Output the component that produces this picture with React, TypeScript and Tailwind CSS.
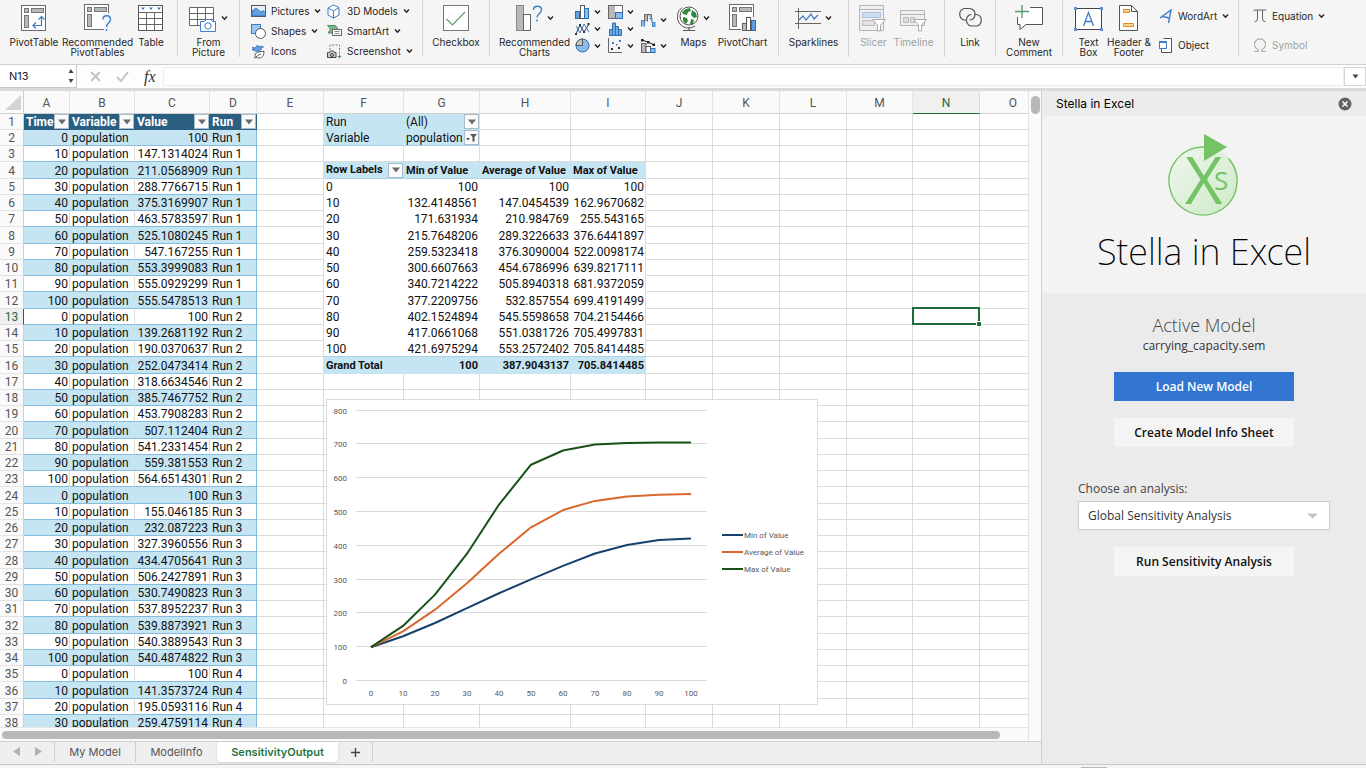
import React from "react";
import clsx from "clsx";

/* ---------- data ---------- */

const COLUMNS = [
  { name: "A", width: "w-[46px]" },
  { name: "B", width: "w-[65px]" },
  { name: "C", width: "w-[75px]" },
  { name: "D", width: "w-[47px]" },
  { name: "E", width: "w-[67px]" },
  { name: "F", width: "w-[80px]" },
  { name: "G", width: "w-[76px]" },
  { name: "H", width: "w-[91px]" },
  { name: "I", width: "w-[75px]" },
  { name: "J", width: "w-[67px]" },
  { name: "K", width: "w-[67px]" },
  { name: "L", width: "w-[67px]" },
  { name: "M", width: "w-[66px]" },
  { name: "N", width: "w-[67px]" },
  { name: "O", width: "w-[67px]" },
];

const RUNS: string[][] = [
  ["100", "147.1314024", "211.0568909", "288.7766715", "375.3169907", "463.5783597", "525.1080245", "547.167255", "553.3999083", "555.0929299", "555.5478513"],
  ["100", "139.2681192", "190.0370637", "252.0473414", "318.6634546", "385.7467752", "453.7908283", "507.112404", "541.2331454", "559.381553", "564.6514301"],
  ["100", "155.046185", "232.087223", "327.3960556", "434.4705641", "506.2427891", "530.7490823", "537.8952237", "539.8873921", "540.3889543", "540.4874822"],
  ["100", "141.3573724", "195.0593116", "259.4759114"],
];

const TABLE_ROWS = RUNS.flatMap((values, run) =>
  values.map((value, i) => [String(i * 10), "population", value, `Run ${run + 1}`]),
);

const PIVOT_ROWS = [
  ["0", "100", "100", "100"],
  ["10", "132.4148561", "147.0454539", "162.9670682"],
  ["20", "171.631934", "210.984769", "255.543165"],
  ["30", "215.7648206", "289.3226633", "376.6441897"],
  ["40", "259.5323418", "376.3090004", "522.0098174"],
  ["50", "300.6607663", "454.6786996", "639.8217111"],
  ["60", "340.7214222", "505.8940318", "681.9372059"],
  ["70", "377.2209756", "532.857554", "699.4191499"],
  ["80", "402.1524894", "545.5598658", "704.2154466"],
  ["90", "417.0661068", "551.0381726", "705.4997831"],
  ["100", "421.6975294", "553.2572402", "705.8414485"],
];

const SERIES = [
  { name: "Min of Value", color: "#17406d", column: 1 },
  { name: "Average of Value", color: "#d9682b", column: 2 },
  { name: "Max of Value", color: "#175217", column: 3 },
];

/* ---------- ribbon icons ---------- */

interface IconProps {
  w: number;
  h: number;
  children: React.ReactNode;
}

const Icon: React.FC<IconProps> = ({ w, h, children }) => (
  <svg width={w} height={h} viewBox={`0 0 ${w} ${h}`} fill="none" className="shrink-0" aria-hidden="true">
    {children}
  </svg>
);

const Chevron = () => (
  <Icon w={7} h={6}>
    <path d="M1 1.5 3.5 4.2 6 1.5" stroke="#222" strokeWidth="1.4" />
  </Icon>
);

const PivotFrame = () => (
  <>
    <rect x="0.5" y="0.5" width="24" height="25" fill="#fff" stroke="#6b6b6b" />
    <rect x="3.5" y="3.5" width="4" height="4" fill="#b8b8b8" stroke="#777" />
    <rect x="10.5" y="3.5" width="12" height="4" fill="#b8b8b8" stroke="#777" />
    <rect x="3.5" y="10.5" width="4" height="12" fill="#b8b8b8" stroke="#777" />
  </>
);

const PivotTableIcon = () => (
  <Icon w={26} h={26}>
    <PivotFrame />
    <path d="M12 20.5h8.5V12M17.5 14.5l3-3 3 3M15 17.5l-3 3 3 3" stroke="#3b7dc8" strokeWidth="1.2" />
  </Icon>
);

const RecommendedPivotIcon = () => (
  <Icon w={28} h={28}>
    <PivotFrame />
    <path d="M19 9h9v18h-8z" fill="#f5f5f5" />
    <path d="M19 15.500c0-5 7.500-5 7.500 0 0 3.500-4 3.500-4 7.500M22.500 25v2" stroke="#3b7dc8" strokeWidth="1.4" />
  </Icon>
);

const TableIcon = () => (
  <Icon w={26} h={26}>
    <rect x="0.5" y="0.5" width="24" height="25" fill="#fff" stroke="#555" />
    <path d="M.5 7.500h24M.5 13.500h24M.5 19.500h24M8.500 7v18M16.500 7v18" stroke="#666" />
    <path d="M3 2.500h4L5 5zM11 2.500h4L13 5zM19 2.500h4L21 5z" fill="#2f74c4" />
  </Icon>
);

const FromPictureIcon = () => (
  <Icon w={28} h={27}>
    <path d="M.5 2.500h24v18H.5zM.5 8.500h24M.5 14.500h24M8.500 2.500v18M16.500 2.500v18" fill="#fff" stroke="#666" />
    <path d="M11.500 16.500h4l1.500-2h5l1.500 2h3v10h-15z" fill="#fff" stroke="#3b7dc8" />
    <circle cx="19" cy="21" r="3.200" stroke="#3b7dc8" />
  </Icon>
);

const PicturesIcon = () => (
  <Icon w={15} h={12}>
    <rect x="0.5" y="0.5" width="14" height="11" fill="#e8f1fb" stroke="#555" />
    <path d="M1 6l4-3 5 4 2-1.500 2.500 2V11H1z" fill="#5f9fe0" stroke="#2f6db5" strokeWidth="0.8" />
  </Icon>
);

const ShapesIcon = () => (
  <Icon w={15} h={15}>
    <rect x="0.5" y="0.5" width="9" height="9" fill="#9cc4ec" stroke="#3b7dc8" />
    <circle cx="9.500" cy="9.500" r="5" fill="#fff" stroke="#555" />
  </Icon>
);

const IconsIcon = () => (
  <Icon w={15} h={15}>
    <path d="M1 3.500l3 .5 2.500-3 1 2 3-1 2 1-2 1c-.5 4-5 4.500-9.500 1.500l2-.5z" fill="#5f9fe0" stroke="#2f6db5" strokeWidth="0.8" />
    <path d="M4 13.500c-1-6 5-6 9-6 0 6-4 8-8 5.500M3.500 14.500c2-2 4-4 6.500-4.500" fill="#fff" stroke="#555" />
  </Icon>
);

const ModelsIcon = () => (
  <Icon w={15} h={15}>
    <path d="M6.500 1l5.500 2.500v7.500l-5.500 3-5.500-3V4z" fill="#fff" stroke="#3b7dc8" />
    <path d="M1 4l5.500 3L12 3.500M6.500 7v7" stroke="#3b7dc8" />
  </Icon>
);

const SmartArtIcon = () => (
  <Icon w={15} h={12}>
    <path d="M.5.5h8L11 4 8 8H1l2.500-4z" fill="#79b98a" stroke="#4b9460" />
    <rect x="5.500" y="4.500" width="9" height="6" fill="#fff" stroke="#666" />
    <path d="M7.500 6.500h5M7.500 8.500h5" stroke="#888" />
  </Icon>
);

const ScreenshotIcon = () => (
  <Icon w={15} h={15}>
    <path d="M3 6V1h9.500v9" stroke="#777" strokeDasharray="2 1.500" />
    <path d="M.5 8.500h2l1-1.500h3l1 1.500h1.500v5H.5z" fill="#ccc" stroke="#444" />
    <circle cx="5" cy="11" r="1.500" stroke="#444" />
    <path d="M12.500 10.500v4M10.500 12.500h4" stroke="#4b9460" />
  </Icon>
);

const CheckboxIcon = () => (
  <Icon w={26} h={26}>
    <rect x="0.5" y="0.5" width="25" height="25" fill="#fff" stroke="#777" />
    <path d="M3.500 14l6 6L22 7" stroke="#5a9e6c" strokeWidth="1.2" />
  </Icon>
);

const RecommendedChartsIcon = () => (
  <Icon w={27} h={26}>
    <rect x="0.5" y="0.5" width="7" height="25" fill="#b8b8b8" stroke="#888" />
    <rect x="7.500" y="9.500" width="7" height="16" fill="#fff" stroke="#666" />
    <path d="M17.500 5c0-5 8-5 8 0 0 3.500-4.500 3.500-4.500 7.500M21 14.500v2" stroke="#3b7dc8" strokeWidth="1.400" />
  </Icon>
);

const ColumnChartIcon = () => (
  <Icon w={15} h={14}>
    <rect x="0.5" y="6.500" width="4" height="7" fill="#5f9fe0" stroke="#2f6db5" />
    <rect x="5.500" y="0.5" width="4" height="13" fill="#fff" stroke="#555" />
    <rect x="9.500" y="3.500" width="4" height="10" fill="#8dbcea" stroke="#2f6db5" />
  </Icon>
);

const LineChartIcon = () => (
  <Icon w={15} h={14}>
    <path d="M1 12L5 3l4 7 5-8" stroke="#333" />
    <path d="M1 4l4 7 4-9 5 8" stroke="#3b7dc8" />
    <path d="M0 11h2v2H0zM4 2h2v2H4zM8 9h2v2H8zM12.500 1h2v2h-2z" fill="#333" />
  </Icon>
);

const PieChartIcon = () => (
  <Icon w={15} h={15}>
    <circle cx="7.500" cy="7.500" r="6.500" fill="#8dbcea" stroke="#2f6db5" />
    <path d="M7.500 7.500V1A6.500 6.500 0 0 0 1 7.500z" fill="#c4c4c4" stroke="#555" />
  </Icon>
);

const TreemapIcon = () => (
  <Icon w={15} h={14}>
    <rect x="0.5" y="0.5" width="14" height="13" fill="#fff" stroke="#666" />
    <rect x="1" y="1" width="6" height="12" fill="#b8b8b8" />
    <rect x="7.500" y="7.500" width="7" height="6" fill="#8dbcea" stroke="#2f6db5" />
  </Icon>
);

const HistogramIcon = () => (
  <Icon w={15} h={14}>
    <path d="M1.500 13.500v-6h3v6zM4.500 13.500V1h3v12.500zM7.500 13.500v-9h3v9zM10.500 13.500v-6h3v6z" fill="#6fa9e4" stroke="#2f6db5" />
  </Icon>
);

const ScatterIcon = () => (
  <Icon w={15} h={15}>
    <path d="M.5 0v14.500H14" stroke="#666" />
    <path d="M3 10h2v2H3zM10 9h2v2h-2z" fill="#333" />
    <path d="M4 4h2v2H4zM8 6h1.500v1.500H8zM11 2h2v2h-2z" fill="#3b7dc8" />
  </Icon>
);

const WaterfallIcon = () => (
  <Icon w={15} h={16}>
    <path d="M.5 14.500v-6h3v6" stroke="#3b7dc8" fill="#8dbcea" />
    <path d="M3.500 9.500v-7h3v7M6.500 2.500h4v5" fill="#b8b8b8" stroke="#666" />
    <path d="M8.500 6.500h2.500v4M11.500 10.500h2.500v4h-2.500z" stroke="#3b7dc8" fill="#8dbcea" />
  </Icon>
);

const ComboIcon = () => (
  <Icon w={15} h={15}>
    <rect x="0.5" y="5.500" width="4.500" height="9" fill="#b8b8b8" stroke="#666" />
    <rect x="5" y="8.500" width="4.500" height="6" fill="#fff" stroke="#555" />
    <rect x="9.500" y="10.500" width="4.500" height="4" fill="#8dbcea" stroke="#2f6db5" />
    <path d="M1 2l6 2 6 3" stroke="#222" />
    <path d="M0 1h2.500v2.500H0zM6 3h2.500v2.500H6zM11.500 5.500H14V8h-2.500z" fill="#222" />
  </Icon>
);

const MapsIcon = () => (
  <Icon w={22} h={27}>
    <circle cx="12" cy="11" r="9" fill="#fff" stroke="#555" />
    <path d="M9 4l4-1 1 3-3 1-1 3-4-1-1-2zM15 5l4 3 1 4-3 1-3-3zM6 12l4 1 1 3-2 3-3-3zM14 14l3 1-1 4-3 0z" fill="#35873f" />
    <path d="M5 2.500A11 11 0 1 0 18 21M12 22v3.500M6 25.500h12" stroke="#555" />
  </Icon>
);

const PivotChartIcon = () => (
  <Icon w={28} h={28}>
    <PivotFrame />
    <path d="M12 17h5v-4h11v15H12z" fill="#f5f5f5" />
    <rect x="13.500" y="19.500" width="4" height="7" fill="#b8b8b8" stroke="#666" />
    <rect x="17.500" y="13.500" width="4" height="13" fill="#fff" stroke="#555" />
    <rect x="22.500" y="16.500" width="4" height="10" fill="#5f9fe0" stroke="#2f6db5" />
  </Icon>
);

const SparklineIcon = () => (
  <Icon w={26} h={22}>
    <path d="M0 4.500h26M0 16.500h26M3.500 1v21" stroke="#666" />
    <path d="M4 13l4-4 3 4 5-6 3 5 4-4" stroke="#3b7dc8" strokeWidth="1.200" />
  </Icon>
);

const Funnel = () => <path d="M13.500 14.500h13l-5 5.500v6h-3v-6z" fill="#fff" stroke="#aaa" />;

const SlicerIcon = () => (
  <Icon w={28} h={27}>
    <path d="M.5.5h24v25H.5zM.5 4.500h24" fill="#f0f0f0" stroke="#b5b5b5" />
    <rect x="3.500" y="7.500" width="18" height="5" fill="#cfdff2" stroke="#a9c2e0" />
    <rect x="3.500" y="15.500" width="12" height="5" fill="#e2e2e2" stroke="#bbb" />
    <Funnel />
  </Icon>
);

const TimelineIcon = () => (
  <Icon w={28} h={27}>
    <path d="M.5 5.500h24v15H.5zM.5 9.500h24" fill="#f0f0f0" stroke="#b5b5b5" />
    <path d="M3.500 12.500h5v5h-5zM10.500 12.500h4v5h-4z" fill="#ddd" stroke="#bbb" />
    <Funnel />
  </Icon>
);

const LinkIcon = () => (
  <Icon w={27} h={22}>
    <path d="M9 13H7A6 6 0 0 1 7 1.500h5.500a5.800 5.800 0 0 1 5 8.500c-1 2-3 3-5 3" stroke="#555" strokeWidth="1.200" />
    <path d="M17.500 7.500h2.500a6 6 0 0 1 0 11.500h-5.500a5.800 5.800 0 0 1-4.500-8.500c1-2 2.500-3 4.500-3" stroke="#555" strokeWidth="1.200" />
  </Icon>
);

const CommentIcon = () => (
  <Icon w={28} h={26}>
    <path d="M15 2.500h12.500v17H11l-6 5v-5H2.500V12" fill="#fff" stroke="#555" />
    <path d="M0 6.500h14M7 0v13" stroke="#5a9e6c" strokeWidth="1.400" />
  </Icon>
);

const TextBoxIcon = () => (
  <Icon w={29} h={25}>
    <rect x="1.500" y="2.500" width="26" height="21" fill="#fff" stroke="#444" />
    <path d="M0 1h3v3H0zM26 1h3v3h-3zM0 22h3v3H0zM26 22h3v3h-3z" fill="#5f8fd0" />
    <path d="M9.500 20l5-13.500 5 13.500M11.500 15.500h6" stroke="#3b7dc8" strokeWidth="1.300" />
  </Icon>
);

const HeaderFooterIcon = () => (
  <Icon w={20} h={26}>
    <path d="M.5.5h12l6 6v19H.5z" fill="#fff" stroke="#555" />
    <path d="M12.500.5v6h6" stroke="#555" />
    <path d="M4.500 4.500h6v3h-6zM4.500 18.500h10v3h-10z" fill="#fbd28f" stroke="#e08a2b" />
  </Icon>
);

const WordArtIcon = () => (
  <Icon w={13} h={15}>
    <path d="M1 9L12 1 9.500 14M3.500 7.500l7 1.500" stroke="#3b7dc8" strokeWidth="1.400" />
  </Icon>
);

const ObjectIcon = () => (
  <Icon w={13} h={15}>
    <path d="M4.500.5h8v14h-10v-4" fill="#fff" stroke="#555" />
    <rect x="0.5" y="3.500" width="7" height="7" fill="#fff" stroke="#3b7dc8" />
    <path d="M0 3h8v2H0z" fill="#3b7dc8" />
  </Icon>
);

const EquationIcon = () => (
  <Icon w={14} h={14}>
    <path d="M0 2.500Q.5 1 3 1h10.500M4.500 1v8q0 4-3 4M9.500 1v9q0 3 3 2.500" stroke="#666" />
  </Icon>
);

const SymbolIcon = () => (
  <Icon w={14} h={15}>
    <path d="M1 13.500h4v-2A5.500 5.500 0 1 1 9 11.500v2h4" stroke="#aaa" strokeWidth="1.200" />
  </Icon>
);

/* ---------- ribbon ---------- */

const RibbonGroup: React.FC<{ className?: string; last?: boolean; children: React.ReactNode }> = ({
  className,
  last,
  children,
}) => <div className={clsx("flex h-[57px] shrink-0", !last && "border-r border-[#d6d6d6]", className)}>{children}</div>;

interface BigButtonProps {
  icon: React.ReactNode;
  lines: string[];
  className?: string;
  menu?: boolean;
  disabled?: boolean;
}

const BigButton: React.FC<BigButtonProps> = ({ icon, lines, className, menu, disabled }) => (
  <button
    type="button"
    disabled={disabled}
    className={clsx("flex shrink-0 flex-col items-center justify-start pt-[3px]", disabled && "text-[#a0a0a0]", className)}
  >
    <span className="mb-[4px] flex h-[30px] shrink-0 items-center gap-1">
      {icon}
      {menu && <Chevron />}
    </span>
    {lines.map((line) => (
      <span key={line} className="leading-[10px] whitespace-nowrap">
        {line}
      </span>
    ))}
  </button>
);

interface SmallButtonProps {
  icon: React.ReactNode;
  label: string;
  menu?: boolean;
  disabled?: boolean;
}

const SmallButton: React.FC<SmallButtonProps> = ({ icon, label, menu, disabled }) => (
  <button
    type="button"
    disabled={disabled}
    className={clsx("flex h-5 shrink-0 items-center gap-[5px] whitespace-nowrap", disabled && "text-[#a0a0a0]")}
  >
    <span className="flex w-[15px] justify-center">{icon}</span>
    {label}
    {menu && <Chevron />}
  </button>
);

const ChartButton: React.FC<{ icon: React.ReactNode; label: string }> = ({ icon, label }) => (
  <button type="button" aria-label={label} className="flex h-[17px] shrink-0 items-center gap-1">
    {icon}
    <Chevron />
  </button>
);

const Ribbon = () => (
  <div className="flex h-[65px] shrink-0 overflow-hidden border-b border-[#cfcfcf] bg-[#f5f5f5] text-[10px] text-[#262626]">
    <RibbonGroup className="w-[178px] gap-[7px] pl-[11px]">
      <BigButton className="w-[46px]" icon={<PivotTableIcon />} lines={["PivotTable"]} />
      <BigButton className="w-[67px]" icon={<RecommendedPivotIcon />} lines={["Recommended", "PivotTables"]} />
      <BigButton className="w-[26px]" icon={<TableIcon />} lines={["Table"]} />
    </RibbonGroup>
    <RibbonGroup className="w-[62px] justify-center">
      <BigButton icon={<FromPictureIcon />} lines={["From", "Picture"]} menu />
    </RibbonGroup>
    <RibbonGroup className="w-[183px] pl-[11px]">
      <div className="flex w-[76px] flex-col items-start pt-[1px]">
        <SmallButton icon={<PicturesIcon />} label="Pictures" menu />
        <SmallButton icon={<ShapesIcon />} label="Shapes" menu />
        <SmallButton icon={<IconsIcon />} label="Icons" />
      </div>
      <div className="flex flex-col items-start pt-[1px]">
        <SmallButton icon={<ModelsIcon />} label="3D Models" menu />
        <SmallButton icon={<SmartArtIcon />} label="SmartArt" menu />
        <SmallButton icon={<ScreenshotIcon />} label="Screenshot" menu />
      </div>
    </RibbonGroup>
    <RibbonGroup className="w-[67px] justify-center">
      <BigButton icon={<CheckboxIcon />} lines={["Checkbox"]} />
    </RibbonGroup>
    <RibbonGroup className="w-[289px] pl-[11px]">
      <BigButton className="w-[67px]" icon={<RecommendedChartsIcon />} lines={["Recommended", "Charts"]} menu />
      <div className="ml-[7px] flex gap-[7px] pt-[3px]">
        <div className="flex flex-col">
          <ChartButton icon={<ColumnChartIcon />} label="Column" />
          <ChartButton icon={<LineChartIcon />} label="Line" />
          <ChartButton icon={<PieChartIcon />} label="Pie" />
        </div>
        <div className="flex flex-col">
          <ChartButton icon={<TreemapIcon />} label="Hierarchy" />
          <ChartButton icon={<HistogramIcon />} label="Statistical" />
          <ChartButton icon={<ScatterIcon />} label="Scatter" />
        </div>
        <div className="flex flex-col gap-[9px] pt-2">
          <ChartButton icon={<WaterfallIcon />} label="Waterfall" />
          <ChartButton icon={<ComboIcon />} label="Combo" />
        </div>
      </div>
      <BigButton className="ml-[9px] w-[35px]" icon={<MapsIcon />} lines={["Maps"]} menu />
      <BigButton className="ml-[8px] w-[47px]" icon={<PivotChartIcon />} lines={["PivotChart"]} />
    </RibbonGroup>
    <RibbonGroup className="w-[70px] justify-center">
      <BigButton icon={<SparklineIcon />} lines={["Sparklines"]} menu />
    </RibbonGroup>
    <RibbonGroup className="w-[96px] justify-center gap-[6px]">
      <BigButton icon={<SlicerIcon />} lines={["Slicer"]} disabled />
      <BigButton icon={<TimelineIcon />} lines={["Timeline"]} disabled />
    </RibbonGroup>
    <RibbonGroup className="w-[51px] justify-center">
      <BigButton icon={<LinkIcon />} lines={["Link"]} />
    </RibbonGroup>
    <RibbonGroup className="w-[67px] justify-center">
      <BigButton icon={<CommentIcon />} lines={["New", "Comment"]} />
    </RibbonGroup>
    <RibbonGroup className="w-[176px] pl-[11px]">
      <BigButton className="w-[29px]" icon={<TextBoxIcon />} lines={["Text", "Box"]} />
      <BigButton className="ml-[5px] w-[42px]" icon={<HeaderFooterIcon />} lines={["Header &", "Footer"]} />
      <div className="ml-[8px] flex flex-col items-start gap-[9px] pt-[6px]">
        <SmallButton icon={<WordArtIcon />} label="WordArt" menu />
        <SmallButton icon={<ObjectIcon />} label="Object" />
      </div>
    </RibbonGroup>
    <RibbonGroup className="pl-[13px]" last>
      <div className="flex flex-col items-start gap-[9px] pt-[6px]">
        <SmallButton icon={<EquationIcon />} label="Equation" menu />
        <SmallButton icon={<SymbolIcon />} label="Symbol" disabled />
      </div>
    </RibbonGroup>
  </div>
);

/* ---------- formula bar ---------- */

const FormulaBar = () => (
  <div className="flex h-[26px] shrink-0 items-center border-b-[3px] border-[#dadada] bg-[#fdfdfd]">
    <div className="flex h-[23px] w-[77px] items-center border-r border-b border-[#c8c8c8] bg-white pr-[1px] pl-[9px]">
      <input
        aria-label="Name box"
        defaultValue="N13"
        className="min-w-0 flex-1 bg-transparent text-[11px] text-[#1a1a1a] outline-none"
      />
      <Icon w={8} h={16}>
        <path d="M4 1l2.500 4h-5zM4 15l2.500-4h-5z" fill="#444" />
      </Icon>
    </div>
    <div className="flex w-[86px] items-center gap-[15px] pl-[13px]">
      <button type="button" aria-label="Cancel">
        <Icon w={11} h={11}>
          <path d="M1 1l9 9M10 1l-9 9" stroke="#c2c2c2" strokeWidth="1.800" />
        </Icon>
      </button>
      <button type="button" aria-label="Enter">
        <Icon w={13} h={11}>
          <path d="M1 6l4 4 7-9" stroke="#c2c2c2" strokeWidth="1.800" />
        </Icon>
      </button>
      <button type="button" className="font-['Liberation_Serif',serif] text-[16px] leading-5 text-[#333] italic">
        fx
      </button>
    </div>
    <input aria-label="Formula" className="h-[19px] min-w-0 flex-1 border border-[#ececec] bg-white outline-none" />
    <button
      type="button"
      aria-label="Expand formula bar"
      className="flex h-[19px] w-[22px] items-center justify-center border border-[#d5d5d5] bg-white"
    >
      <Icon w={7} h={5}>
        <path d="M.5.5h6l-3 4z" fill="#444" />
      </Icon>
    </button>
  </div>
);

/* ---------- sheet ---------- */

const FilterButton: React.FC<{ label: string; filtered?: boolean }> = ({ label, filtered }) => (
  <button
    type="button"
    aria-label={`Filter ${label}`}
    className="flex size-[15px] shrink-0 items-center justify-center border border-[#a9bccb] bg-[#fafafa]"
  >
    {filtered ? (
      <Icon w={11} h={9}>
        <path d="M0 5h4L2 7.500zM4 1h7L8.500 4v4.500h-2V4z" fill="#555" />
      </Icon>
    ) : (
      <Icon w={8} h={6}>
        <path d="M0 .5h8L4 5.500z" fill="#6b6b6b" />
      </Icon>
    )}
  </button>
);

interface Cell {
  text?: string;
  className: string;
  filter?: boolean;
  filtered?: boolean;
}

const GRID = "border-[#dcdcdc]";
const TABLE_HEADS = ["Time", "Variable", "Value", "Run"];
const PIVOT_HEADS = ["Row Labels", "Min of Value", "Average of Value", "Max of Value"];

function getCell(row: number, col: number): Cell {
  // data table, A:D
  if (col < 4) {
    if (row === 1) {
      return { text: TABLE_HEADS[col], filter: true, className: "border-[#2a5f82] bg-[#2a5f82] font-bold text-white pl-[2px]" };
    }
    return {
      text: TABLE_ROWS[row - 2]?.[col],
      className: clsx(
        "border-b-[#84bde0]",
        row % 2 === 0 ? "bg-[#c6e5f3]" : "bg-white",
        col === 3 ? "border-r-[#84bde0]" : row % 2 === 0 ? "border-r-[#c6e5f3]" : "border-r-[#dcdcdc]",
        col % 2 === 0 ? "pr-[1px] text-right" : "pl-[2px]",
      ),
    };
  }
  // pivot filters, F1:G2
  if (row <= 2 && (col === 5 || col === 6)) {
    const text = [
      ["Run", "(All)"],
      ["Variable", "population"],
    ][row - 1][col - 5];
    return {
      text,
      filter: col === 6,
      filtered: row === 2,
      className: clsx("border-[#c6e5f3] bg-[#c6e5f3] pl-[2px]", row === 2 && "border-b-[#a9d3ea]"),
    };
  }
  // pivot body, F4:I16
  if (col >= 5 && col <= 8 && row >= 4 && row <= 16) {
    const i = col - 5;
    if (row === 4) {
      return {
        text: PIVOT_HEADS[i],
        filter: i === 0,
        className: "border-r-[#c6e5f3] border-b-[#a9d3ea] bg-[#c6e5f3] pl-[2px] text-[11px] font-bold",
      };
    }
    if (row === 16) {
      return {
        text: ["Grand Total", "100", "387.9043137", "705.8414485"][i],
        className: clsx("border-[#c6e5f3] bg-[#c6e5f3] text-[11px] font-bold", i === 0 ? "pl-[2px]" : "pr-[1px] text-right"),
      };
    }
    return {
      text: PIVOT_ROWS[row - 5][i],
      className: clsx(
        col === 8 ? "border-r-[#dcdcdc]" : "border-r-white",
        row === 15 ? "border-b-[#a9d3ea]" : "border-b-white",
        i === 0 ? "pl-[2px]" : "pr-[1px] text-right",
      ),
    };
  }
  return { className: GRID };
}

const SheetCell: React.FC<{ row: number; col: number }> = ({ row, col }) => {
  const cell = getCell(row, col);
  const selected = row === 13 && col === 13;
  return (
    <td
      className={clsx(
        "border-r border-b whitespace-nowrap",
        !cell.filter && "pt-[1px]",
        selected && "relative",
        cell.className,
      )}
    >
      {cell.filter ? (
        <div className="flex h-[15px] items-center justify-between">
          {cell.text}
          <FilterButton label={cell.text ?? ""} filtered={cell.filtered} />
        </div>
      ) : (
        cell.text
      )}
      {selected && (
        <div className="absolute -inset-x-[1px] -top-[2px] -bottom-[1px] border-2 border-[#1f6b3c]">
          <div className="absolute -right-[3px] -bottom-[3px] size-[5px] border-t border-l border-white bg-[#1f6b3c]" />
        </div>
      )}
    </td>
  );
};

const Sheet = () => (
  <table className="w-[1047px] table-fixed border-separate border-spacing-0 font-['Roboto',sans-serif] text-[12px] leading-[14px] text-[#111]">
    <colgroup>
      <col className="w-[24px]" />
      {COLUMNS.map((column) => (
        <col key={column.name} className={column.width} />
      ))}
    </colgroup>
    <thead>
      <tr className="h-[23px] bg-[#fafafa] text-[#555]">
        <th aria-label="Select all" className="border-r border-b border-[#cfcfcf] p-0">
          <div className="flex justify-end pr-[2px]">
            <Icon w={16} h={15}>
              <path d="M16 0v15H0z" fill="#d4d4d4" />
            </Icon>
          </div>
        </th>
        {COLUMNS.map((column) => (
          <th
            key={column.name}
            scope="col"
            className={clsx(
              "border-r border-b pt-[2px] font-normal",
              column.name === "N"
                ? "border-r-[#dcdcdc] border-b-[#1f6b3c] bg-[#f0f0f0] text-[#1f6b3c]"
                : "border-r-[#e4e4e4] border-b-[#cfcfcf]",
            )}
          >
            {column.name}
          </th>
        ))}
      </tr>
    </thead>
    <tbody>
      {Array.from({ length: 38 }, (_, i) => i + 1).map((row) => (
        <tr key={row} className="h-[16px] nth-[4n]:h-[17px]">
          <th
            scope="row"
            className={clsx(
              "border-r border-b pt-[1px] text-center font-normal",
              row === 13
                ? "border-r-[#1f6b3c] border-b-[#dcdcdc] bg-[#f0f0f0] text-[#1f6b3c]"
                : "border-r-[#cfcfcf] border-b-[#e4e4e4] bg-[#fafafa] text-[#555]",
            )}
          >
            {row}
          </th>
          {COLUMNS.map((column, col) => (
            <SheetCell key={column.name} row={row} col={col} />
          ))}
        </tr>
      ))}
    </tbody>
  </table>
);

/* ---------- chart ---------- */

const chartX = (i: number) => 45 + i * 32;
const chartY = (value: number) => 281 - value * 0.338;

const PivotLineChart = () => (
  <div className="absolute top-[308px] left-[326px] border border-[#dcdcdc] bg-white">
    <svg width={490} height={304} viewBox="0 0 490 304" className="font-['Roboto',sans-serif] text-[8px]" fill="#595959">
      {[0, 100, 200, 300, 400, 500, 600, 700, 800].map((tick) => (
        <g key={tick}>
          <path d={`M29 ${Math.round(chartY(tick)) - 0.5}h351`} stroke="#dadada" />
          <text x="20" y={chartY(tick) + 3} textAnchor="end">
            {tick}
          </text>
        </g>
      ))}
      {PIVOT_ROWS.map((row, i) => (
        <text key={row[0]} x={chartX(i) - 1} y="296" textAnchor="middle">
          {row[0]}
        </text>
      ))}
      {SERIES.map((series, i) => (
        <g key={series.name}>
          <polyline
            points={PIVOT_ROWS.map((row, j) => `${chartX(j) - 1},${chartY(Number(row[series.column]))}`).join(" ")}
            fill="none"
            stroke={series.color}
            strokeWidth="2"
            strokeLinejoin="round"
          />
          <path d={`M395 ${135 + i * 17}h21`} stroke={series.color} strokeWidth="2" />
          <text x="417" y={138 + i * 17}>
            {series.name}
          </text>
        </g>
      ))}
    </svg>
  </div>
);

/* ---------- sheet tabs ---------- */

const SheetTabs = () => (
  <div className="flex h-[23px] shrink-0 items-stretch border-t border-[#cfcfcf] bg-[#efefef] pb-[2px] text-[11px] text-[#555]">
    <div className="flex w-[55px] items-center justify-center gap-[13px] border-r border-[#d0d0d0]">
      <button type="button" aria-label="Previous sheet">
        <Icon w={8} h={10}>
          <path d="M7 0v9L0 4.500z" fill="#b0b0b0" />
        </Icon>
      </button>
      <button type="button" aria-label="Next sheet">
        <Icon w={8} h={10}>
          <path d="M1 0v9l7-4.500z" fill="#b0b0b0" />
        </Icon>
      </button>
    </div>
    <button type="button" className="w-[81px] border-r border-[#d0d0d0]">
      My Model
    </button>
    <button type="button" className="w-[81px]">
      ModelInfo
    </button>
    <button type="button" className="w-[121px] rounded-b-sm bg-white font-semibold text-[#1d7440] shadow-sm">
      SensitivityOutput
    </button>
    <button type="button" aria-label="Add sheet" className="flex w-[35px] items-center justify-center border-r border-[#d0d0d0]">
      <Icon w={9} h={9}>
        <path d="M4.500 0v9M0 4.500h9" stroke="#444" strokeWidth="1.400" />
      </Icon>
    </button>
  </div>
);

/* ---------- add-in pane ---------- */

const StellaLogo = () => (
  <svg width={72} height={84} viewBox="0 0 72 84" className="overflow-visible" aria-hidden="true">
    <defs>
      <linearGradient id="disc" x1="0" y1="0" x2="1" y2="1">
        <stop offset="0" stopColor="#f0f6ee" />
        <stop offset="1" stopColor="#cdeac6" />
      </linearGradient>
    </defs>
    <circle cx="36" cy="48" r="34" fill="url(#disc)" />
    <path d="M36 14A34 34 0 1 0 60.500 25.500" fill="none" stroke="#74c365" strokeWidth="1.300" />
    <text x="17" y="71" fontSize="65" fill="#74c365" className="font-['Open_Sans',sans-serif]">
      X
      <tspan x="46" y="57" fontSize="26">
        S
      </tspan>
    </text>
    <path d="M36 1v27l23-14z" fill="#74c365" />
  </svg>
);

const PaneButton: React.FC<{ label: string; primary?: boolean }> = ({ label, primary }) => (
  <button
    type="button"
    className={clsx(
      "h-[29px] w-[180px] font-semibold",
      primary ? "bg-[#3276d2] text-white" : "bg-[#f4f4f4] text-[#111]",
    )}
  >
    {label}
  </button>
);

const StellaPane = () => (
  <aside className="flex w-[325px] shrink-0 flex-col border-l border-[#cfcfcf] bg-[#ebebeb]">
    <div className="flex h-[25px] items-center justify-between bg-[#ececec] pr-[14px] pl-[14px] text-[12px] text-black">
      Stella in Excel
      <button type="button" aria-label="Close pane">
        <Icon w={14} h={14}>
          <circle cx="7" cy="7" r="6.500" fill="#636363" />
          <path d="M4.500 4.500l5 5M9.500 4.500l-5 5" stroke="#fff" strokeWidth="1.500" />
        </Icon>
      </button>
    </div>
    <div className="flex h-[177px] flex-col items-center bg-[#f3f3f3] pt-[17px]">
      <StellaLogo />
      <h1 className="mt-[10px] font-['Noto_Sans',sans-serif] text-[36px] leading-[50px] font-extralight text-black">
        Stella in Excel
      </h1>
    </div>
    <div className="flex flex-col items-center pt-[20px] font-['Open_Sans',sans-serif] text-[12px]">
      <h2 className="text-[18px] leading-6 font-light text-[#444]">Active Model</h2>
      <p className="mb-[17px] leading-[18px] text-[#333]">carrying_capacity.sem</p>
      <PaneButton label="Load New Model" primary />
      <div className="mt-[17px]">
        <PaneButton label="Create Model Info Sheet" />
      </div>
      <div className="mt-[30px] mb-[17px] w-[252px]">
        <label htmlFor="analysis" className="block leading-6 text-[#444]">
          Choose an analysis:
        </label>
        <div className="relative">
          <select
            id="analysis"
            className="h-[29px] w-full appearance-none border border-[#ccc] bg-white px-[9px] text-[#333]"
          >
            <option>Global Sensitivity Analysis</option>
          </select>
          <span className="pointer-events-none absolute top-3 right-3">
            <Icon w={11} h={6}>
              <path d="M0 .5h11L5.500 5.500z" fill="#c4c4c4" />
            </Icon>
          </span>
        </div>
      </div>
      <PaneButton label="Run Sensitivity Analysis" />
    </div>
  </aside>
);

export default function App() {
  return (
    <div className="flex h-screen flex-col overflow-hidden bg-[#f5f5f5] font-['Inter',sans-serif]">
      <Ribbon />
      <FormulaBar />
      <div className="flex min-h-0 flex-1">
        <main className="flex min-w-0 flex-1 flex-col">
          <div className="flex min-h-0 flex-1">
            <div className="flex min-w-0 flex-1 flex-col">
              <div className="relative min-h-0 flex-1 overflow-hidden bg-white">
                <Sheet />
                <PivotLineChart />
              </div>
              <div className="flex h-[14px] shrink-0 items-center border-t border-[#e4e4e4] bg-[#fafafa] pr-[28px] pl-[2px]">
                <div className="h-2 flex-1 rounded-full bg-[#b8b8b8]" />
              </div>
            </div>
            <div className="flex w-[13px] justify-center border-l border-[#e4e4e4] bg-[#fafafa] pt-[5px]">
              <div className="h-[18px] w-[9px] rounded-full bg-[#b8b8b8]" />
            </div>
          </div>
          <SheetTabs />
        </main>
        <StellaPane />
      </div>
      <div className="flex h-1 shrink-0 items-end justify-end border-t border-[#c9c9c9] bg-[#f5f5f5] pr-[259px]">
        <div className="h-[1px] w-[26px] bg-[#b8b8b8]" />
      </div>
    </div>
  );
}
